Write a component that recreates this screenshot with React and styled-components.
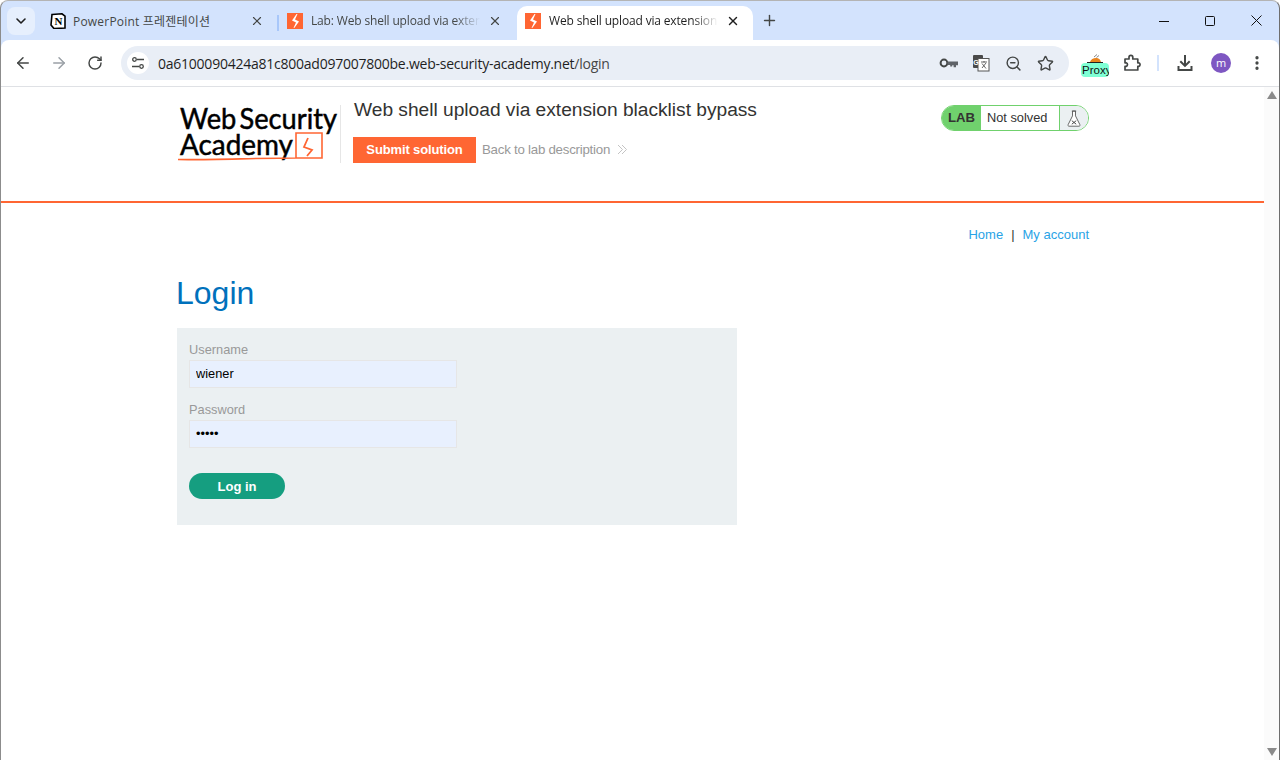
import styled, { createGlobalStyle } from "styled-components";
import { ArrowLeft, ArrowRight, RotateCw, Star, ZoomOut, Plus, X, ChevronDown, EllipsisVertical } from "lucide-react";

const GlobalStyle = createGlobalStyle`
  html, body { margin: 0; padding: 0; height: 760px; overflow: hidden; background: #fff; }
  * { box-sizing: border-box; }
`;

const Frame = styled.div`
  width: 1280px;
  height: 760px;
  display: flex;
  flex-direction: column;
  border: 1px solid #8c8c8c;
  border-top-color: #b4b4b4;
  border-right-color: #6e6e6e;
  border-bottom: none;
  border-radius: 8px 8px 0 0;
  overflow: hidden;
  background: #d3e3fd;
  font-family: "Liberation Sans", Arial, sans-serif;
`;

/* browser chrome */
const TabStrip = styled.div`
  height: 39px;
  flex: none;
  display: flex;
  align-items: flex-end;
  padding-left: 6px;
`;
const TabSearch = styled.div`
  width: 28px;
  height: 28px;
  margin-bottom: 5px;
  margin-right: 7px;
  border-radius: 8px;
  background: #e6effd;
  display: flex;
  align-items: center;
  justify-content: center;
  color: #1f1f1f;
`;
const Tab = styled.div`
  width: ${(p) => p.$w || 237}px;
  height: 34px;
  flex: none;
  display: flex;
  align-items: center;
  padding: 0 ${(p) => p.$pr || 13}px 5px 8px;
  gap: ${(p) => p.$gap || 8}px;
  border-radius: 10px 10px 0 0;
  background: ${(p) => (p.$active ? "#fff" : "transparent")};
  color: ${(p) => (p.$active ? "#1f1f1f" : "#444746")};
`;
const TabTitle = styled.span`
  flex: 1;
  min-width: 0;
  white-space: nowrap;
  overflow: hidden;
  font: 12px "Open Sans", "Noto Sans CJK KR", sans-serif;
  letter-spacing: ${(p) => (p.$fade ? "-0.16px" : "0.2px")};
  -webkit-mask-image: ${(p) => (p.$fade ? "linear-gradient(to right, #000 85%, transparent)" : "none")};
  mask-image: ${(p) => (p.$fade ? "linear-gradient(to right, #000 85%, transparent)" : "none")};
`;
const TabDivider = styled.span`
  width: 2px;
  height: 16px;
  margin-bottom: 9px;
  flex: none;
  background: #a8c7fa;
`;
const NewTab = styled.div`
  width: 28px;
  height: 28px;
  margin: 0 0 6px 2px;
  display: flex;
  align-items: center;
  justify-content: center;
  color: #444746;
`;
const WindowControls = styled.div`
  margin-left: auto;
  align-self: stretch;
  display: flex;
  align-items: center;
`;
const WindowButton = styled.div`
  width: 46px;
  height: 38px;
  display: flex;
  align-items: center;
  justify-content: center;
`;
const Toolbar = styled.div`
  height: 47px;
  flex: none;
  display: flex;
  align-items: center;
  background: #fff;
  border-bottom: 1px solid #dfe1e5;
  padding-left: 4px;
  border-radius: 8px 8px 0 0;
`;
const NavIcon = styled.div`
  width: 36px;
  height: 34px;
  flex: none;
  display: flex;
  align-items: center;
  justify-content: center;
  color: ${(p) => (p.$off ? "#9aa0a6" : "#444746")};
`;
const Omnibox = styled.div`
  width: 948px;
  height: 34px;
  margin-left: 8px;
  flex: none;
  display: flex;
  align-items: center;
  border-radius: 17px;
  background: #e9eef6;
  padding: 0 14px 0 6px;
`;
const SiteButton = styled.div`
  width: 22px;
  height: 22px;
  border-radius: 50%;
  background: #fff;
  flex: none;
  display: flex;
  align-items: center;
  justify-content: center;
  margin-right: 9px;
`;
const Url = styled.div`
  flex: 1;
  font: 14px "Open Sans", sans-serif;
  letter-spacing: -0.24px;
  color: #1f1f1f;
  white-space: nowrap;
  span { color: #474747; }
`;
const OmniIcons = styled.div`
  display: flex;
  align-items: center;
  gap: 12px;
  color: #444746;
`;
const OmniIcon = styled.div`
  width: 20px;
  height: 20px;
  display: flex;
  align-items: center;
  justify-content: center;
`;
const ProxyBadge = styled.div`
  width: 28px;
  margin-left: 12px;
  padding-top: 4px;
  display: flex;
  flex-direction: column;
  align-items: center;
  flex: none;
`;
const ProxyLabel = styled.div`
  width: 28px;
  height: 14px;
  background: #7fffd4;
  border-radius: 4px;
  overflow: hidden;
  font: 11.5px/14px "Liberation Sans", sans-serif;
  color: #111;
  padding-left: 1px;
  white-space: nowrap;
`;
const ToolDivider = styled.span`
  width: 2px;
  height: 16px;
  background: #d3e3fd;
  margin: 0 8px 0 7px;
  flex: none;
`;
const ToolIcon = styled.div`
  width: 36px;
  height: 34px;
  flex: none;
  margin-left: ${(p) => p.$ml || 0}px;
  display: flex;
  align-items: center;
  justify-content: center;
  color: #444746;
`;
const Avatar = styled.div`
  width: 20px;
  height: 20px;
  border-radius: 50%;
  background: #7e57c2;
  color: #fff;
  font: 11px/19px "Open Sans", sans-serif;
  text-align: center;
`;

/* page */
const Viewport = styled.div`
  flex: 1;
  min-height: 0;
  display: flex;
  background: #fff;
`;
const Page = styled.div`
  flex: 1;
  min-width: 0;
  display: flex;
  flex-direction: column;
  color: #333332;
`;
const Scrollbar = styled.div`
  width: 15px;
  flex: none;
  background: #fbfbfb;
  display: flex;
  flex-direction: column;
  justify-content: space-between;
  align-items: center;
  padding: 4px 0 4px;
`;
const ScrollArrow = styled.span`
  width: 0;
  height: 0;
  border-left: 5px solid transparent;
  border-right: 5px solid transparent;
  border-${(p) => (p.$down ? "top" : "bottom")}: 8px solid #8a8a8a;
`;
const LabHeader = styled.header`
  height: 116px;
  flex: none;
  border-bottom: 2px solid #ff6633;
`;
const Container = styled.div`
  width: 912px;
  margin-left: 176px;
`;
const HeaderRow = styled(Container)`
  display: flex;
  align-items: flex-start;
  padding-top: 18px;
`;
const LogoLink = styled.a`
  width: 163px;
  height: 58px;
  flex: none;
  display: block;
`;
const TitleBlock = styled.div`
  flex: 1;
  height: 58px;
  border-left: 1px solid #e6e6e6;
  padding-left: 12px;
`;
const LabTitle = styled.h2`
  margin: -6px 0 0;
  padding-left: 1px;
  font-size: 19.2px;
  line-height: 22px;
  font-weight: 400;
  color: #333332;
  letter-spacing: -0.02px;
`;
const TitleActions = styled.div`
  display: flex;
  align-items: center;
  margin-top: 16px;
`;
const SubmitButton = styled.button`
  width: 123px;
  height: 26px;
  border: 0;
  padding: 0 0 2px;
  background: #ff6633;
  color: #fff;
  font: bold 13px "Liberation Sans", sans-serif;
  letter-spacing: -0.13px;
`;
const BackLink = styled.a`
  margin-left: 6px;
  margin-top: -2px;
  display: flex;
  align-items: center;
  gap: 7px;
  color: #999;
  font-size: 13.3px;
  letter-spacing: -0.25px;
`;
const LabStatus = styled.div`
  width: 148px;
  height: 26px;
  flex: none;
  display: flex;
  border: 1px solid #70d16d;
  border-radius: 13px;
  overflow: hidden;
`;
const LabTag = styled.div`
  width: 39px;
  background: #70d16d;
  display: flex;
  align-items: center;
  justify-content: center;
  padding-bottom: 2px;
  font-weight: 700;
  font-size: 13.2px;
  color: #333332;
`;
const LabState = styled.div`
  flex: 1;
  display: flex;
  align-items: center;
  padding: 0 0 2px 6px;
  color: #333332;
  font-size: 12.8px;
`;
const LabIcon = styled.div`
  width: 29px;
  background: #ebf0f2;
  border-left: 1px solid #70d16d;
  display: flex;
  align-items: center;
  justify-content: center;
`;
const Content = styled(Container)`
  display: flex;
  flex-direction: column;
`;
const TopLinks = styled.nav`
  display: flex;
  justify-content: flex-end;
  align-items: center;
  gap: 8px;
  margin-top: 24px;
  font-size: 13px;
  line-height: 16px;
  a { color: #29a3e6; }
`;
const Heading = styled.h1`
  margin: 31px 0 0 -1px;
  font-size: 32px;
  line-height: 38px;
  font-weight: 400;
  color: #0071bc;
`;
const LoginForm = styled.form`
  width: 560px;
  height: 197px;
  margin-top: 16px;
  background: #ebf0f2;
  padding: 14px 12px 0;
  display: flex;
  flex-direction: column;
  align-items: flex-start;
`;
const FieldLabel = styled.label`
  font-size: 12.8px;
  line-height: 16px;
  height: 18px;
  color: #999;
  margin-top: ${(p) => p.$mt || 0}px;
`;
const Field = styled.input`
  width: 268px;
  height: 28px;
  border: 1px solid #e6e6e6;
  background: #e8f0fe;
  padding: 0 6px 2px;
  font: 12.8px "Liberation Sans", sans-serif;
  color: #000;
  outline: none;
`;
const LoginButton = styled.button`
  width: 96px;
  height: 26px;
  margin-top: 25px;
  border: 0;
  padding: 0;
  border-radius: 13px;
  background: #159e80;
  color: #fff;
  font: bold 13px "Liberation Sans", sans-serif;
`;

const Favicon = () => (
  <svg width="16" height="16" viewBox="0 0 16 16" style={{ flex: "none" }}>
    <rect width="16" height="16" fill="#ff6633" />
    <path d="M9.5 1 5 7.5l4 2L6.5 15l1-.3L12 8.5 8 6.5 10.5 1z" fill="#fff" />
  </svg>
);

const NotionIcon = () => (
  <svg width="16" height="16" viewBox="0 0 16 16" style={{ flex: "none" }}>
    <path d="M2 1.5 12 .8l3 2.4V15l-11 .6L1 12z" fill="#fff" stroke="#000" strokeWidth="1.6" />
    <text x="8.6" y="12.4" fontFamily="Liberation Serif, serif" fontWeight="700" fontSize="11" textAnchor="middle" fill="#000">N</text>
  </svg>
);

const TuneIcon = () => (
  <svg width="14" height="14" viewBox="0 0 14 14" fill="none" stroke="#444746" strokeWidth="1.3">
    <circle cx="3.5" cy="3.5" r="1.8" />
    <path d="M6 3.5h7M1 10.5h7" />
    <circle cx="10.5" cy="10.5" r="1.8" />
  </svg>
);

const KeyIcon = () => (
  <svg width="20" height="12" viewBox="0 0 20 12" fill="none">
    <circle cx="5" cy="6" r="3.4" stroke="#444746" strokeWidth="2" />
    <path d="M8.5 4.6H19v3.6h-2v2h-2.4v-2h-1.4v1.4h-2V8H8.5z" fill="#5f6368" />
  </svg>
);

const TranslateIcon = () => (
  <svg width="18" height="18" viewBox="0 0 18 18">
    <rect x="1" y="1" width="10" height="13" rx="1" fill="#4a4a4a" />
    <rect x="6" y="4.5" width="11" height="12.5" fill="#fff" stroke="#555" />
    <text x="4" y="10.5" fontFamily="Liberation Sans, sans-serif" fontWeight="700" fontSize="7" fill="#fff" textAnchor="middle">G</text>
    <path d="M9 8h6M12 7v1.5M14 9l-4 5M10 9.5l4 5" fill="none" stroke="#555" strokeWidth="0.9" />
  </svg>
);

const PuzzleIcon = () => (
  <svg width="18" height="18" viewBox="0 0 18 18" fill="none" stroke="#444746" strokeWidth="1.7" strokeLinejoin="round">
    <path d="M2 5h4V3.2a1.9 1.9 0 0 1 3.8 0V5h5v3.8h1a1.9 1.9 0 0 1 0 3.6h-1V16H2v-3.6h1.2a1.9 1.9 0 0 0 0-3.6H2z" />
  </svg>
);

const DownloadIcon = () => (
  <svg width="18" height="18" viewBox="0 0 18 18" fill="#444746">
    <path d="M8 1h2v8.5l3-3 1.4 1.4L9 13.3 3.6 7.9 5 6.5l3 3z" />
    <path d="M1.5 12h2v3h11v-3h2v5h-15z" />
  </svg>
);

const ProxyArt = () => (
  <svg width="16" height="9" viewBox="0 0 16 9" style={{ display: "block" }}>
    <path d="M0 8.5h16" stroke="#222" strokeWidth="1" />
    <path d="M3 8c1-3 4-4.5 7-4 2 .3 3.5 2 4 4z" fill="#e8841f" />
    <path d="M7 3 10 .5M9.5 3.5 12 1.5" stroke="#888" strokeWidth="1" />
  </svg>
);

const FlaskIcon = () => (
  <svg width="14" height="17" viewBox="0 0 16 19" fill="#fff" stroke="#555" strokeWidth="1">
    <path d="M5.5 1h5M6.3 1v5.5L1.3 16.5c-.5 1 .1 1.8 1 1.8h11.4c.9 0 1.5-.8 1-1.8L9.7 6.5V1z" />
    <path d="M5.5 12l5 4M10.5 12l-5 4" stroke="#333" />
  </svg>
);

const DoubleChevron = () => (
  <svg width="10" height="11" viewBox="0 0 10 11" fill="none" stroke="#c4c4c4" strokeWidth="1">
    <path d="M1 1l4.5 4.5L1 10M5 1l4.5 4.5L5 10" />
  </svg>
);

const MinimizeIcon = () => (
  <svg width="10" height="10" viewBox="0 0 10 10"><path d="M0 5.5h10" stroke="#111" strokeWidth="1" /></svg>
);
const MaximizeIcon = () => (
  <svg width="10" height="10" viewBox="0 0 10 10"><rect x=".5" y=".5" width="9" height="9" rx="1" fill="none" stroke="#111" strokeWidth="1" /></svg>
);
const CloseIcon = () => (
  <svg width="11" height="11" viewBox="0 0 11 11"><path d="M.5.5l10 10M10.5.5l-10 10" stroke="#111" strokeWidth="1" /></svg>
);

const AcademyLogo = () => (
  <svg width="163" height="58" viewBox="0 0 163 58">
    <text x="3" y="24" fontFamily="Lato, sans-serif" fontSize="29" fill="#000" stroke="#000" strokeWidth="0.5" wordSpacing="-4" textLength="157" lengthAdjust="spacingAndGlyphs">Web Security</text>
    <text x="3" y="50" fontFamily="Lato, sans-serif" fontSize="29" fill="#000" stroke="#000" strokeWidth="0.5" textLength="113" lengthAdjust="spacingAndGlyphs">Academy</text>
    <path d="M1 54.5c30 .6 80-1.5 118-1.5V28h26v25h-26" fill="none" stroke="#ff6633" strokeWidth="1.6" />
    <path d="M131 33l-4 9 8 3-5 6" fill="none" stroke="#ff6633" strokeWidth="1.8" />
  </svg>
);

const App = () => {
  return (
    <>
      <GlobalStyle />
      <Frame>
        <TabStrip>
          <TabSearch><ChevronDown size={16} strokeWidth={2.4} /></TabSearch>
          <Tab $w={235} $gap={7}>
            <NotionIcon />
            <TabTitle>PowerPoint 프레젠테이션</TabTitle>
            <X size={14} strokeWidth={2} />
          </Tab>
          <TabDivider />
          <Tab $w={238} $pr={15}>
            <Favicon />
            <TabTitle $fade>Lab: Web shell upload via extension blacklist bypass</TabTitle>
            <X size={14} strokeWidth={2} />
          </Tab>
          <Tab $active $w={236}>
            <Favicon />
            <TabTitle $fade>Web shell upload via extension blacklist bypass</TabTitle>
            <X size={14} strokeWidth={2.4} />
          </Tab>
          <NewTab><Plus size={17} strokeWidth={2} /></NewTab>
          <WindowControls>
            <WindowButton><MinimizeIcon /></WindowButton>
            <WindowButton><MaximizeIcon /></WindowButton>
            <WindowButton><CloseIcon /></WindowButton>
          </WindowControls>
        </TabStrip>
        <Toolbar>
          <NavIcon><ArrowLeft size={18} /></NavIcon>
          <NavIcon $off><ArrowRight size={18} /></NavIcon>
          <NavIcon><RotateCw size={16} strokeWidth={2.2} /></NavIcon>
          <Omnibox>
            <SiteButton><TuneIcon /></SiteButton>
            <Url>0a6100090424a81c800ad097007800be.web-security-academy.net<span>/login</span></Url>
            <OmniIcons>
              <OmniIcon><KeyIcon /></OmniIcon>
              <OmniIcon><TranslateIcon /></OmniIcon>
              <OmniIcon><ZoomOut size={17} strokeWidth={2} /></OmniIcon>
              <OmniIcon><Star size={17} strokeWidth={2} /></OmniIcon>
            </OmniIcons>
          </Omnibox>
          <ProxyBadge>
            <ProxyArt />
            <ProxyLabel>Proxy</ProxyLabel>
          </ProxyBadge>
          <ToolIcon $ml={5}><PuzzleIcon /></ToolIcon>
          <ToolDivider />
          <ToolIcon><DownloadIcon /></ToolIcon>
          <ToolIcon><Avatar>m</Avatar></ToolIcon>
          <ToolIcon><EllipsisVertical size={18} strokeWidth={2.4} /></ToolIcon>
        </Toolbar>
        <Viewport>
          <Page>
            <LabHeader>
              <HeaderRow>
                <LogoLink><AcademyLogo /></LogoLink>
                <TitleBlock>
                  <LabTitle>Web shell upload via extension blacklist bypass</LabTitle>
                  <TitleActions>
                    <SubmitButton>Submit solution</SubmitButton>
                    <BackLink>Back to lab description <DoubleChevron /></BackLink>
                  </TitleActions>
                </TitleBlock>
                <LabStatus>
                  <LabTag>LAB</LabTag>
                  <LabState>Not solved</LabState>
                  <LabIcon><FlaskIcon /></LabIcon>
                </LabStatus>
              </HeaderRow>
            </LabHeader>
            <Content>
              <TopLinks>
                <a>Home</a>
                <span>|</span>
                <a>My account</a>
              </TopLinks>
              <Heading>Login</Heading>
              <LoginForm onSubmit={(e) => e.preventDefault()}>
                <FieldLabel>Username</FieldLabel>
                <Field defaultValue="wiener" />
                <FieldLabel $mt={14}>Password</FieldLabel>
                <Field type="password" defaultValue="peter" />
                <LoginButton>Log in</LoginButton>
              </LoginForm>
            </Content>
          </Page>
          <Scrollbar>
            <ScrollArrow />
            <ScrollArrow $down />
          </Scrollbar>
        </Viewport>
      </Frame>
    </>
  );
};

export default App;
